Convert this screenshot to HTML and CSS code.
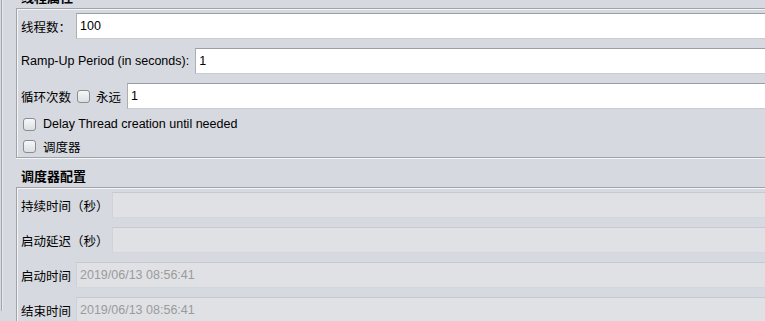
FILE: index.html
```html
<!DOCTYPE html>
<html>
<head>
	<meta charset="utf-8">
	<title>线程组</title>
	<link rel="stylesheet" href="styles.css">
</head>
<body>
	<div class="frame">
		<div class="group_title first">线程属性</div>
		<div class="group thread">
			<div class="row">
				<span class="lbl">线程数：</span>
				<input class="field" type="text" value="100">
			</div>
			<div class="row">
				<span class="lbl wide">Ramp-Up Period (in seconds):</span>
				<input class="field" type="text" value="1">
			</div>
			<div class="row">
				<span class="lbl wide">循环次数</span>
				<span class="check inline"></span>
				<span class="lbl wide">永远</span>
				<input class="field" type="text" value="1">
			</div>
			<div class="check_row">
				<span class="check"></span>
				<span class="lbl">Delay Thread creation until needed</span>
			</div>
			<div class="check_row">
				<span class="check"></span>
				<span class="lbl">调度器</span>
			</div>
		</div>

		<div class="group_title">调度器配置</div>
		<div class="group sched">
			<div class="row">
				<span class="lbl tight">持续时间（秒）</span>
				<input class="field off" type="text" value="" disabled>
			</div>
			<div class="row">
				<span class="lbl tight">启动延迟（秒）</span>
				<input class="field off" type="text" value="" disabled>
			</div>
			<div class="row">
				<span class="lbl">启动时间</span>
				<input class="field off" type="text" value="2019/06/13 08:56:41" disabled>
			</div>
			<div class="row">
				<span class="lbl">结束时间</span>
				<input class="field off" type="text" value="2019/06/13 08:56:41" disabled>
			</div>
		</div>
	</div>
</body>
</html>
```

FILE: styles.css
```css
* {
	margin: 0;
	padding: 0;
	box-sizing: border-box;
}
html, body {
	height: 100%;
	overflow: hidden;
}
body {
	background-color: #d6d9df;
	font-family: "Liberation Sans", "Noto Sans CJK SC", sans-serif;
	font-size: 12.5px;
	color: #000;
}
.frame {
	margin-left: 1px;
	padding-left: 3px;
	border-left: 1px solid #a3a6ab;
	box-shadow: inset 1px 0 0 #e4e6ea;
	height: 100%;
	width: 800px;
}
.frame > * {
	margin-left: 11px;
}
.group_title {
	font-weight: bold;
	font-size: 13px;
	height: 29px;
	line-height: 16px;
	padding-top: 11px;
	padding-left: 5px;
}
.group_title.first {
	margin-top: -10px;
	padding-top: 0;
	height: 18px;
}
.group {
	border-top: 1px solid #a0a3a8;
	border-left: 1px solid #a0a3a8;
	border-bottom: 1px solid #a0a3a8;
	box-shadow: inset 1px 1px 0 #f4f5f7, 0 1px 0 #f4f5f7;
	padding: 4px 0 0 4px;
}
.row {
	display: flex;
	align-items: center;
	height: 26px;
	margin-bottom: 9px;
}
.lbl {
	white-space: nowrap;
	margin-right: 5px;
}
.lbl.wide {
	margin-right: 6px;
}
.lbl.tight {
	margin-right: 3px;
}
.field {
	flex: 1;
	height: 26px;
	border: 1px solid #c9cbcf;
	border-top-color: #9a9da2;
	border-left-color: #abaeb3;
	border-right: none;
	background-color: #fff;
	font: inherit;
	color: #000;
	padding-left: 3px;
	outline: none;
}
.field.off {
	background-color: #dfe1e5;
	border-top-color: #c6c9ce;
	border-left-color: #cfd2d6;
	border-bottom-color: #d3d6da;
	color: #9b9b9b;
}
.check {
	display: inline-block;
	flex: none;
	width: 13px;
	height: 13px;
	border: 1px solid #8a8d92;
	border-radius: 3px;
	background: linear-gradient(#f7f8f9, #dcdee2);
}
.check.inline {
	margin-right: 6px;
}
.thread .row:nth-child(3) {
	margin-bottom: 4px;
}
.check_row {
	display: flex;
	align-items: center;
	height: 22px;
	padding-left: 2px;
}
.check_row .check {
	margin-right: 7px;
}
```
